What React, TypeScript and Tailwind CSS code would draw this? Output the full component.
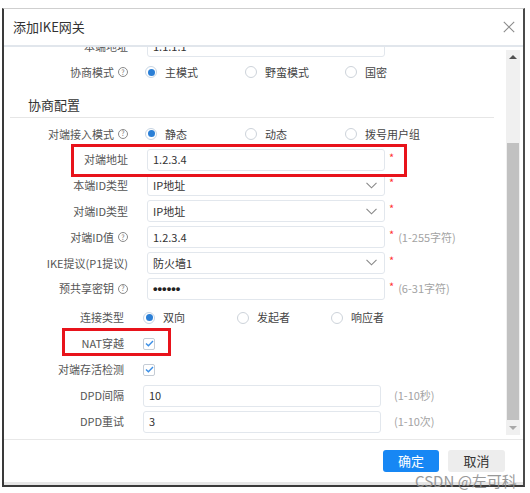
import React from "react";

const FONT = "font-['Noto_Sans_CJK_SC','Liberation_Sans',sans-serif]";

function Help() {
  return (
    <span className="ml-[4px] inline-flex h-[10px] w-[10px] items-center justify-center rounded-full border border-[#8a8a8a] text-[7px] leading-none text-[#777]">
      ?
    </span>
  );
}

function Star() {
  return <span className="ml-[4px] self-start pt-[3px] text-[11px] leading-none text-[#f33]">*</span>;
}

function Hint({ children }: { children: React.ReactNode }) {
  return <span className="ml-[4px] text-[11px] text-[#a3a3a3]">{children}</span>;
}

function Label({ text, help, narrow }: { text: string; help?: boolean; narrow?: boolean }) {
  return (
    <div
      className={
        narrow
          ? "flex w-[120px] shrink-0 items-center justify-end text-[11px] text-[#555]"
          : "flex w-[124px] shrink-0 items-center justify-end text-[11px] text-[#555]"
      }
    >
      <span>{text}</span>
      {help && <Help />}
    </div>
  );
}

function TextBox({ value }: { value: string }) {
  return (
    <div className="flex h-[22px] w-[238px] items-center rounded-[3px] border border-[#e2e7ed] px-[5px] text-[11px] text-[#333]">
      {value}
    </div>
  );
}

function SelectBox({ value }: { value: string }) {
  return (
    <div className="flex h-[22px] w-[238px] items-center justify-between rounded-[3px] border border-[#e2e7ed] pl-[5px] pr-[7px] text-[11px] text-[#333]">
      <span>{value}</span>
      <svg width="11" height="7" viewBox="0 0 11 7">
        <path d="M0.5 0.8 L5.5 5.8 L10.5 0.8" fill="none" stroke="#888" strokeWidth="1.1" />
      </svg>
    </div>
  );
}

function Radio({ label, checked, w }: { label: string; checked?: boolean; w: string }) {
  return (
    <div className={`flex items-center ${w}`}>
      <span
        className={
          checked
            ? "flex h-[12px] w-[12px] items-center justify-center rounded-full border border-[#c7d5e4] bg-white"
            : "flex h-[12px] w-[12px] items-center justify-center rounded-full border border-[#cdd3da] bg-white"
        }
      >
        {checked && <span className="h-[7px] w-[7px] rounded-full bg-[#2b7fd6]" />}
      </span>
      <span className="ml-[8px] text-[11px] text-[#444]">{label}</span>
    </div>
  );
}

function CheckBox() {
  return (
    <span className="flex h-[12px] w-[12px] items-center justify-center rounded-[2px] border border-[#c5ccd5] bg-white">
      <svg width="9" height="7" viewBox="0 0 9 7">
        <path d="M1 3.5 L3.4 5.8 L8 1" fill="none" stroke="#3a8ee6" strokeWidth="1.4" />
      </svg>
    </span>
  );
}

export default function App() {
  return (
    <div className={`relative h-[493px] w-[530px] overflow-hidden bg-white ${FONT}`}>
      <div className="ml-[2px] mt-[8px] flex h-[479px] w-[523px] flex-col border-b-2 border-l-2 border-r-2 border-t border-b-[#3a3a3a] border-l-[#3a3a3a] border-r-[#4a4a4a] border-t-[#cfcfcf]">
        {/* header */}
        <div className="flex h-[38px] shrink-0 items-center justify-between border-b-2 border-[#e1e6ec] pl-[9px] pr-[8px]">
          <span className="text-[13px] text-[#333]">添加IKE网关</span>
          <svg width="12" height="12" viewBox="0 0 12 12">
            <path d="M0.8 0.8 L11.2 11.2 M11.2 0.8 L0.8 11.2" stroke="#8c8c8c" strokeWidth="1.1" />
          </svg>
        </div>

        {/* body */}
        <div className="flex h-[392px] shrink-0">
          <div className="min-w-0 flex-1 overflow-hidden">
            <div className="-mt-[14px]">
              <div className="flex h-[26px] items-center">
                <Label text="本端地址" />
                <div className="ml-[19px]">
                  <TextBox value="1.1.1.1" />
                </div>
              </div>
              <div className="flex h-[26px] items-center">
                <Label text="协商模式" help />
                <div className="ml-[17px] flex">
                  <Radio label="主模式" checked w="w-[100px]" />
                  <Radio label="野蛮模式" w="w-[100px]" />
                  <Radio label="国密" w="w-[100px]" />
                </div>
              </div>

              <div className="ml-[6px] mr-[12px] h-[33px] border-b border-[#e6e6e6] pl-[18px] pt-[12px]">
                <div className="text-[13px] leading-[16px] text-[#333]">协商配置</div>
              </div>

              <div className="mt-[3px]">
                <div className="flex h-[25.8px] items-center">
                  <Label text="对端接入模式" help />
                  <div className="ml-[17px] flex">
                    <Radio label="静态" checked w="w-[100px]" />
                    <Radio label="动态" w="w-[100px]" />
                    <Radio label="拨号用户组" w="w-[100px]" />
                  </div>
                </div>
                <div className="relative flex h-[25.8px] items-center">
                  <Label text="对端地址" />
                  <div className="ml-[19px] flex items-center">
                    <TextBox value="1.2.3.4" />
                    <Star />
                  </div>
                  <div className="absolute left-[67px] top-[-3px] h-[33px] w-[336px] border-[3px] border-[#e8131b]" />
                </div>
                <div className="flex h-[25.8px] items-center">
                  <Label text="本端ID类型" />
                  <div className="ml-[19px] flex items-center">
                    <SelectBox value="IP地址" />
                    <Star />
                  </div>
                </div>
                <div className="flex h-[25.8px] items-center">
                  <Label text="对端ID类型" />
                  <div className="ml-[19px] flex items-center">
                    <SelectBox value="IP地址" />
                    <Star />
                  </div>
                </div>
                <div className="flex h-[25.8px] items-center">
                  <Label text="对端ID值" help />
                  <div className="ml-[19px] flex items-center">
                    <TextBox value="1.2.3.4" />
                    <Star />
                    <Hint>(1-255字符)</Hint>
                  </div>
                </div>
                <div className="flex h-[25.8px] items-center">
                  <Label text="IKE提议(P1提议)" />
                  <div className="ml-[19px] flex items-center">
                    <SelectBox value="防火墙1" />
                    <Star />
                  </div>
                </div>
                <div className="flex h-[25.8px] items-center">
                  <Label text="预共享密钥" help />
                  <div className="ml-[19px] flex items-center">
                    <div className="flex h-[22px] w-[238px] items-center rounded-[3px] border border-[#e2e7ed] px-[5px] font-['Liberation_Sans',sans-serif] text-[13px] font-bold text-[#222]">
                      ••••••
                    </div>
                    <Star />
                    <Hint>(6-31字符)</Hint>
                  </div>
                </div>
              </div>

              <div className="mt-[3px]">
                <div className="flex h-[26px] items-center">
                  <Label text="连接类型" narrow />
                  <div className="ml-[19px] flex">
                    <Radio label="双向" checked w="w-[94px]" />
                    <Radio label="发起者" w="w-[94px]" />
                    <Radio label="响应者" w="w-[94px]" />
                  </div>
                </div>
                <div className="relative flex h-[26px] items-center">
                  <Label text="NAT穿越" narrow />
                  <div className="ml-[19px]">
                    <CheckBox />
                  </div>
                  <div className="absolute left-[58px] top-[-3px] h-[28px] w-[109px] border-[3px] border-[#e8131b]" />
                </div>
                <div className="flex h-[26px] items-center">
                  <Label text="对端存活检测" narrow />
                  <div className="ml-[19px]">
                    <CheckBox />
                  </div>
                </div>
                <div className="flex h-[26px] items-center">
                  <Label text="DPD间隔" narrow />
                  <div className="ml-[19px] flex items-center">
                    <TextBox value="10" />
                    <span className="ml-[13px] text-[11px] text-[#a3a3a3]">(1-10秒)</span>
                  </div>
                </div>
                <div className="flex h-[26px] items-center">
                  <Label text="DPD重试" narrow />
                  <div className="ml-[19px] flex items-center">
                    <TextBox value="3" />
                    <span className="ml-[13px] text-[11px] text-[#a3a3a3]">(1-10次)</span>
                  </div>
                </div>
              </div>
            </div>
          </div>

          {/* scrollbar */}
          <div className="mb-[4px] mr-[3px] mt-[3px] flex w-[14px] flex-col items-center bg-[#f0f0f0]">
            <div className="flex h-[14px] items-center justify-center">
              <span className="h-0 w-0 border-x-[4px] border-b-[4px] border-x-transparent border-b-[#505050]" />
            </div>
            <div className="mt-[79px] h-[277px] w-[12px] bg-[#c1c1c1]" />
            <div className="flex-1" />
            <div className="flex h-[14px] items-center justify-center">
              <span className="h-0 w-0 border-x-[4px] border-t-[4px] border-x-transparent border-t-[#a8a8a8]" />
            </div>
          </div>
        </div>

        {/* footer */}
        <div className="flex h-[43px] shrink-0 items-start justify-end gap-[9px] border-t border-[#e8e8e8] pr-[18px] pt-[10px]">
          <button className="h-[22px] w-[56px] rounded-[3px] bg-[#1787f4] text-[13px] text-white">确定</button>
          <button className="h-[22px] w-[57px] rounded-[3px] bg-[#ededed] text-[13px] text-[#333]">取消</button>
        </div>
        <div className="h-[3px] shrink-0 bg-[#e6e6e6]" />
      </div>

      <div className="absolute left-[415px] top-[472px] text-[15px] leading-[18px] text-[#8f8f8f] opacity-90">
        CSDN @左可科
      </div>
    </div>
  );
}
